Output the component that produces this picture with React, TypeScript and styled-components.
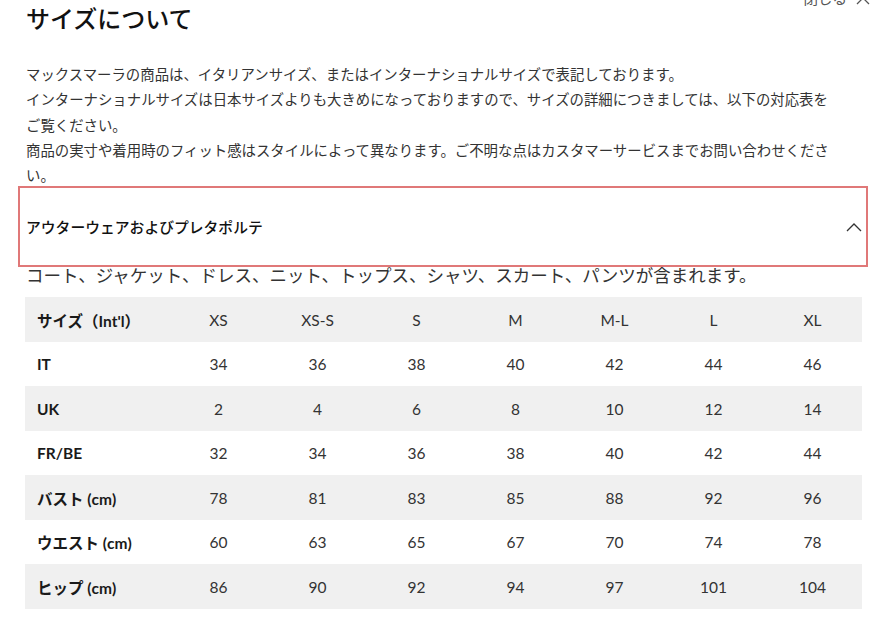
import React from 'react';
import styled, { createGlobalStyle } from 'styled-components';

const GlobalStyle = createGlobalStyle`
  body {
    margin: 0;
    background: #ffffff;
    font-family: Lato, "Noto Sans CJK JP", sans-serif;
    color: #222222;
    overflow: hidden;
  }
`;

const sizes = ['XS', 'XS-S', 'S', 'M', 'M-L', 'L', 'XL'];

const rows: { label: string; values: string[] }[] = [
  { label: 'IT', values: ['34', '36', '38', '40', '42', '44', '46'] },
  { label: 'UK', values: ['2', '4', '6', '8', '10', '12', '14'] },
  { label: 'FR/BE', values: ['32', '34', '36', '38', '40', '42', '44'] },
  { label: 'バスト (cm)', values: ['78', '81', '83', '85', '88', '92', '96'] },
  { label: 'ウエスト (cm)', values: ['60', '63', '65', '67', '70', '74', '78'] },
  { label: 'ヒップ (cm)', values: ['86', '90', '92', '94', '97', '101', '104'] },
];

const Page = styled.div`
  margin-top: -10px;
  padding: 0 24px 0 26px;
`;

const CloseRow = styled.div`
  display: flex;
  justify-content: flex-end;
  height: 16px;
  margin-right: -8px;
`;

const CloseButton = styled.button`
  display: flex;
  align-items: center;
  gap: 9px;
  border: none;
  background: none;
  padding: 0;
  font-family: "Noto Sans CJK JP", sans-serif;
  font-size: 14.5px;
  line-height: 14px;
  color: #555555;
  cursor: pointer;
`;

const Title = styled.h1`
  margin: 0;
  font-family: "Noto Sans CJK JP", sans-serif;
  font-size: 24px;
  line-height: 24px;
  font-weight: 500;
  color: #111111;
`;

const Intro = styled.p`
  margin: 31px 0 0;
  font-family: "Noto Sans CJK JP", sans-serif;
  font-size: 14.4px;
  line-height: 25.3px;
  color: #333333;
`;

const AccordionHeader = styled.div`
  display: flex;
  align-items: center;
  justify-content: space-between;
  height: 77px;
  margin: -1px -6px 0 -8px;
  padding: 0 4px 0 6px;
  border: 2px solid #e07878;
`;

const AccordionTitle = styled.span`
  font-family: "Noto Sans CJK JP", sans-serif;
  font-size: 14.8px;
  font-weight: 500;
  color: #111111;
`;

const Chevron = styled.svg`
  width: 16px;
  height: 10px;
`;

const Description = styled.div`
  margin-top: -2px;
  font-family: "Noto Sans CJK JP", sans-serif;
  font-size: 17.5px;
  line-height: 20px;
  color: #333333;
`;

const Table = styled.table`
  width: 837px;
  margin: 12px 0 0 -1px;
  border-collapse: collapse;
  table-layout: fixed;
`;

const Row = styled.tr<{ $shaded: boolean }>`
  height: 44.5px;
  background: ${({ $shaded }) => ($shaded ? '#f0f0f0' : '#ffffff')};
`;

const LabelCell = styled.td`
  box-sizing: border-box;
  width: 144px;
  padding: 0 0 0 12px;
  font-family: Lato, "Noto Sans CJK JP", sans-serif;
  font-size: 15.5px;
  font-weight: 700;
  color: #1a1a1a;
  white-space: nowrap;
`;

const ValueCell = styled.td`
  box-sizing: border-box;
  width: 99px;
  padding: 0;
  text-align: center;
  font-family: Lato, sans-serif;
  font-size: 15.5px;
  color: #333333;
`;

const App: React.FC = () => {
  return (
    <>
      <GlobalStyle />
      <Page>
        <CloseRow>
          <CloseButton>
            閉じる
            <svg width="14" height="14" viewBox="0 0 14 14">
              <path d="M1 1L13 13M13 1L1 13" stroke="#555" strokeWidth="1.3" fill="none" />
            </svg>
          </CloseButton>
        </CloseRow>
        <Title>サイズについて</Title>
        <Intro>
          マックスマーラの商品は、イタリアンサイズ、またはインターナショナルサイズで表記しております。
          <br />
          インターナショナルサイズは日本サイズよりも大きめになっておりますので、サイズの詳細につきましては、以下の対応表を
          <br />
          ご覧ください。
          <br />
          商品の実寸や着用時のフィット感はスタイルによって異なります。ご不明な点はカスタマーサービスまでお問い合わせくださ
          <br />
          い。
        </Intro>
        <AccordionHeader>
          <AccordionTitle>アウターウェアおよびプレタポルテ</AccordionTitle>
          <Chevron viewBox="0 0 16 10">
            <path d="M1 9L8 2L15 9" stroke="#333" strokeWidth="1.3" fill="none" />
          </Chevron>
        </AccordionHeader>
        <Description>コート、ジャケット、ドレス、ニット、トップス、シャツ、スカート、パンツが含まれます。</Description>
        <Table>
          <tbody>
            <Row $shaded>
              <LabelCell>サイズ（Int'l）</LabelCell>
              {sizes.map((s) => (
                <ValueCell key={s}>{s}</ValueCell>
              ))}
            </Row>
            {rows.map((row, i) => (
              <Row key={row.label} $shaded={i % 2 === 1}>
                <LabelCell>{row.label}</LabelCell>
                {row.values.map((v, j) => (
                  <ValueCell key={j}>{v}</ValueCell>
                ))}
              </Row>
            ))}
          </tbody>
        </Table>
      </Page>
    </>
  );
};

export default App;
